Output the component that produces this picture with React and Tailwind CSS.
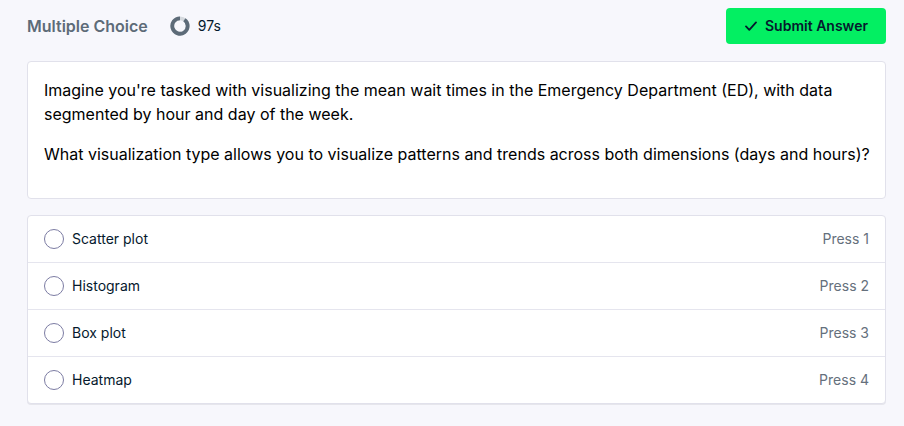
import { useState } from "react";

const options = ["Scatter plot", "Histogram", "Box plot", "Heatmap"];

function TimerRing() {
  return (
    <svg width="20" height="20" viewBox="0 0 20 20" fill="none" aria-hidden="true">
      <circle cx="10" cy="10" r="7.7" stroke="#d5d9de" strokeWidth="3.8" />
      <path d="M14.4 3.7A7.7 7.7 0 1 1 10 2.3" stroke="#5d6b78" strokeWidth="3.8" />
    </svg>
  );
}

function CheckIcon() {
  return (
    <svg width="12" height="10" viewBox="0 0 12 10" fill="none" aria-hidden="true">
      <path
        d="M1 5.4 4.3 8.8 11 1.4"
        stroke="#05192d"
        strokeWidth="1.8"
        strokeLinecap="round"
        strokeLinejoin="round"
      />
    </svg>
  );
}

export default function App() {
  const [selected, setSelected] = useState(null);

  return (
    <main className="min-h-screen bg-[#f7f7fc] pt-2 pr-[18px] pb-5 pl-[27px] font-['Inter',sans-serif] text-[#05192d]">
      <header className="flex h-9 items-center">
        <h1 className="text-base font-semibold text-[#5d6b78]">Multiple Choice</h1>
        <div className="ml-[22px] flex items-center gap-2">
          <TimerRing />
          <span className="text-sm">97s</span>
        </div>
        <button
          type="button"
          className="ml-auto flex h-9 w-40 items-center justify-end gap-2 rounded bg-[#03ef62] pr-[18px] text-sm font-semibold"
        >
          <CheckIcon />
          Submit Answer
        </button>
      </header>

      <section className="mt-[17px] rounded border border-[#e1e1eb] bg-white py-4 pr-2 pl-4 text-base text-black">
        <p className="mb-4">
          Imagine you're tasked with visualizing the mean wait times in the Emergency Department
          (ED), with data segmented by hour and day of the week.
        </p>
        <p className="mb-4">
          What visualization type allows you to visualize patterns and trends across both dimensions
          (days and hours)?
        </p>
      </section>

      <div
        role="radiogroup"
        aria-label="Answers"
        className="mt-4 divide-y divide-[#e5e5ee] rounded border border-[#e1e1eb] bg-white shadow-[0_1px_0_#e6e6ec]"
      >
        {options.map((option, index) => (
          <label key={option} className="flex h-[47px] items-center gap-2 px-4 text-sm last:h-[46px]">
            <input
              type="radio"
              name="answer"
              checked={selected === index}
              onChange={() => setSelected(index)}
              className="size-5 appearance-none rounded-full border border-[#7c7ca3] bg-white checked:border-[6px]"
            />
            <span>{option}</span>
            <span className="ml-auto text-[#65707c]">Press {index + 1}</span>
          </label>
        ))}
      </div>
    </main>
  );
}
